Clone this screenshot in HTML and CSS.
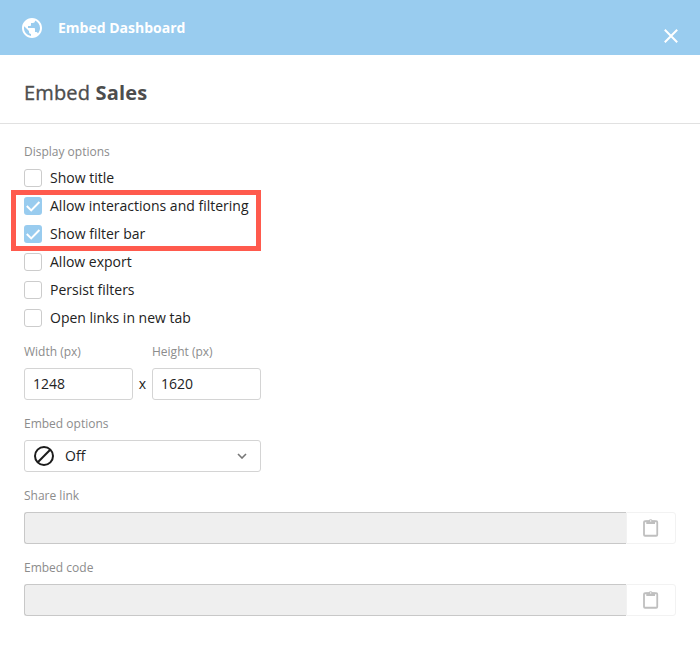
FILE: index.html
```html
<!DOCTYPE html>
<html lang="en">
<head>
<meta charset="utf-8">
<title>Embed Dashboard</title>
<link rel="stylesheet" href="styles.css">
</head>
<body>
<div class="dialog">
  <header class="topbar">
    <svg class="globe" viewBox="0 0 24 24"><path d="M12 2C6.480 2 2 6.480 2 12s4.480 10 10 10 10-4.480 10-10S17.520 2 12 2zm-1 17.930c-3.950-.49-7-3.850-7-7.930 0-.62.08-1.210.21-1.790L9 15v1c0 1.100.9 2 2 2v1.930zm6.900-2.540c-.26-.81-1-1.390-1.900-1.390h-1v-3c0-.55-.45-1-1-1H8v-2h2c.55 0 1-.45 1-1V7h2c1.100 0 2-.9 2-2v-.41c2.930 1.190 5 4.060 5 7.410 0 2.080-.8 3.970-2.100 5.390z"/></svg>
    <span class="topbar-title">Embed Dashboard</span>
    <svg class="close" viewBox="0 0 14 14"><path d="M.8.8l12.400 12.400M13.200.8L.8 13.200"/></svg>
  </header>
  <h1 class="heading">Embed <b>Sales</b></h1>
  <main class="body">
    <div class="label">Display options</div>
    <div class="options">
      <div class="option"><span class="box"></span><span>Show title</span></div>
      <div class="option"><span class="box checked"><svg viewBox="0 0 18 18"><path d="M2.800 9l4.400 4.400L15.400 5"/></svg></span><span>Allow interactions and filtering</span></div>
      <div class="option"><span class="box checked"><svg viewBox="0 0 18 18"><path d="M2.800 9l4.400 4.400L15.400 5"/></svg></span><span>Show filter bar</span></div>
      <div class="option"><span class="box"></span><span>Allow export</span></div>
      <div class="option"><span class="box"></span><span>Persist filters</span></div>
      <div class="option"><span class="box"></span><span>Open links in new tab</span></div>
      <div class="highlight"></div>
    </div>
    <div class="size">
      <div class="label">Width (px)</div><span></span><div class="label">Height (px)</div>
      <div class="field">1248</div><span class="times">x</span><div class="field">1620</div>
    </div>
    <div class="label">Embed options</div>
    <div class="field select">
      <svg class="off" viewBox="0 0 20 20"><circle cx="10" cy="10" r="9"/><path d="M3.800 16.200L16.200 3.800"/></svg>
      <span>Off</span>
      <svg class="chevron" viewBox="0 0 10 6"><path d="M1 1l4 4 4-4"/></svg>
    </div>
    <div class="label">Share link</div>
    <div class="copy">
      <div class="value"></div>
      <div class="copy-button"><svg viewBox="0 0 16 19"><rect x="1" y="3.250" width="13.250" height="14.500" rx="1"/><path class="clip" d="M3.300 2.500h2.400a2.100 2.100 0 0 1 3.900 0H12V6H3.300z"/><circle class="hole" cx="7.650" cy="2.900" r=".7"/></svg></div>
    </div>
    <div class="label">Embed code</div>
    <div class="copy">
      <div class="value"></div>
      <div class="copy-button"><svg viewBox="0 0 16 19"><rect x="1" y="3.250" width="13.250" height="14.500" rx="1"/><path class="clip" d="M3.300 2.500h2.400a2.100 2.100 0 0 1 3.900 0H12V6H3.300z"/><circle class="hole" cx="7.650" cy="2.900" r=".7"/></svg></div>
    </div>
  </main>
</div>
</body>
</html>
```
FILE: styles.css
```css
* { box-sizing: border-box; }
body { margin: 0; background: #fff; color: #222; font: 14px/20px "Open Sans", sans-serif; }
svg { display: block; fill: none; flex: none; }
.dialog { height: 652px; background: #fff; }
.topbar { display: flex; align-items: center; height: 55px; padding: 0 22px 0 20px; background: #99ccef; color: #fff; }
.globe { width: 24px; height: 24px; fill: #fff; }
.topbar-title { margin-left: 14px; font-weight: 700; flex: 1; }
.close { width: 14px; height: 14px; margin-top: 17px; stroke: #fff; stroke-width: 2; }
.heading { margin: 0; height: 69px; padding: 10px 24px 0; border-bottom: 1px solid #e1e1e1; color: #4d4d4d; font-size: 20px; line-height: 56px; font-weight: 500; letter-spacing: .16px; -webkit-text-stroke: .35px #4d4d4d; }
.heading b { font-weight: 700; -webkit-text-stroke: 0; }
.body { padding: 16px 24px 0; }
.label { height: 24px; color: #8c8c8c; font-size: 12px; line-height: 24px; }
.options { position: relative; margin-bottom: 8px; }
.option { display: flex; align-items: center; gap: 8px; height: 28px; }
.box { width: 18px; height: 18px; border: 1px solid #ccc; border-radius: 3px; }
.checked { border: 0; background: #99ccef; }
.checked svg { width: 18px; height: 18px; stroke: #fff; stroke-width: 2; }
.highlight { position: absolute; left: -13px; top: 26px; width: 250px; height: 61px; border: 5px solid #ff5a4d; }
.size { display: grid; grid-template-columns: 109px 19px 109px; grid-template-rows: 28px 32px; margin-bottom: 12px; }
.times { text-align: center; line-height: 32px; }
.field { height: 32px; padding: 0 8px; border: 1px solid #d4d4d4; border-radius: 3px; line-height: 30px; }
.select { display: flex; align-items: center; width: 237px; margin: 4px 0 12px; padding: 0 13px 0 9px; gap: 11px; }
.off { width: 20px; height: 20px; stroke: #1c1c1c; stroke-width: 2; }
.chevron { width: 10px; height: 6px; margin-left: auto; stroke: #777; stroke-width: 1.6; }
.copy { display: flex; height: 32px; margin: 4px 0 12px; }
.value { flex: 1; border: 1px solid #c8c8c8; border-right: 0; border-radius: 3px 0 0 3px; background: #efefef; }
.copy-button { display: flex; justify-content: center; align-items: center; width: 50px; padding-bottom: 1px; border: 1px solid #f2f2f2; border-radius: 0 3px 3px 0; }
.copy-button svg { width: 16px; height: 19px; stroke: #bfbfbf; stroke-width: 1.8; }
.copy-button .clip { fill: #bfbfbf; stroke: none; }
.copy-button .hole { fill: #fff; stroke: none; }
```
